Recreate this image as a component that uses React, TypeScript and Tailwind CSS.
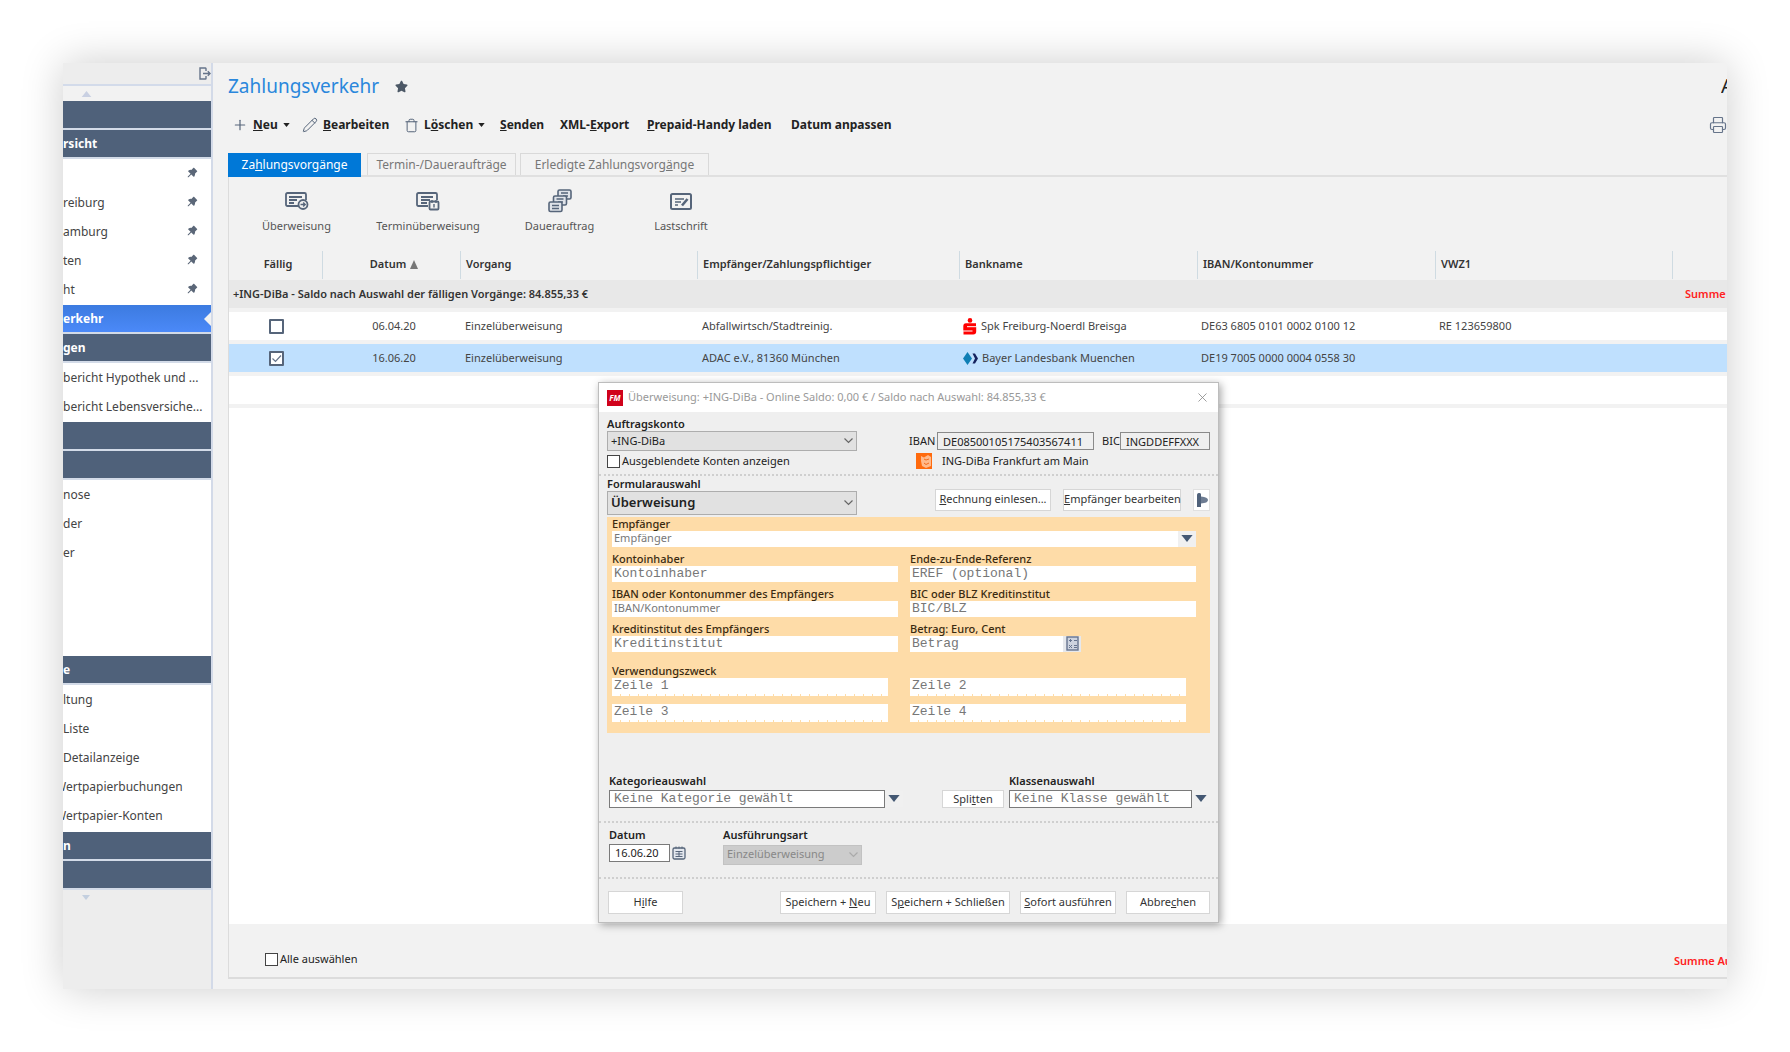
import React from 'react';
import clsx from 'clsx';
import { Pencil, Plus, Printer, Trash, X } from 'lucide-react';
import { AiFillPushpin } from 'react-icons/ai';
import { FaStar } from 'react-icons/fa';

interface NavEntry {
  label: string;
  pinned?: boolean;
  clipped?: boolean;
}

interface NavGroup {
  title: string;
  active?: boolean;
  entries: NavEntry[];
}

const navGroups: NavGroup[] = [
  { title: '', entries: [] },
  {
    title: 'rsicht',
    entries: [
      { label: '', pinned: true },
      { label: 'reiburg', pinned: true },
      { label: 'amburg', pinned: true },
      { label: 'ten', pinned: true },
      { label: 'ht', pinned: true },
    ],
  },
  { title: 'erkehr', active: true, entries: [] },
  {
    title: 'gen',
    entries: [{ label: 'bericht Hypothek und ...' }, { label: 'bericht Lebensversiche...' }],
  },
  { title: '', entries: [] },
  {
    title: '',
    entries: [
      { label: 'nose' },
      { label: 'der' },
      { label: 'er' },
      { label: '' },
      { label: '' },
      { label: '' },
    ],
  },
  {
    title: 'e',
    entries: [
      { label: 'ltung' },
      { label: 'Liste' },
      { label: 'Detailanzeige' },
      { label: 'Wertpapierbuchungen', clipped: true },
      { label: 'Wertpapier-Konten', clipped: true },
    ],
  },
  { title: 'n', entries: [] },
  { title: '', entries: [] },
];

// "&" marks the accelerator key
const Accel = ({ text }: { text: string }) => {
  const i = text.indexOf('&');
  if (i < 0) return <span>{text}</span>;
  return (
    <span>
      {text.slice(0, i)}
      <u className="underline-offset-1">{text[i + 1]}</u>
      {text.slice(i + 2)}
    </span>
  );
};

const Caret = ({ className }: { className?: string }) => (
  <svg viewBox="0 0 8 5" className={clsx('shrink-0', className)} fill="currentColor">
    <path d="M0 0h8L4 5z" />
  </svg>
);

const TransferIcon = () => (
  <svg width="24" height="20" viewBox="0 0 24 20" fill="none" stroke="#56657a" strokeWidth="1.8">
    <path d="M14 15H2.500Q1 15 1 13.500V3.500Q1 2 2.500 2H19.500Q21 2 21 3.500V9" />
    <path d="M4 6h13M4 9h8M4 12h5" />
    <circle cx="18" cy="13.500" r="4.500" fill="#f2f2f2" />
    <path d="M15.500 13.500h4.500M18.200 11.500l2 2-2 2" strokeWidth="1.400" />
  </svg>
);

const ScheduledIcon = () => (
  <svg width="24" height="20" viewBox="0 0 24 20" fill="none" stroke="#56657a" strokeWidth="1.8">
    <path d="M12 15H2.500Q1 15 1 13.500V3.500Q1 2 2.500 2H19.500Q21 2 21 3.500V9" />
    <path d="M5 6h12M5 9h9M5 12h6" />
    <rect x="13.500" y="10.500" width="9" height="8" rx="1" fill="#f2f2f2" />
    <path d="M16 9v3M20 9v3M18 13v3.500" strokeWidth="1.400" />
  </svg>
);

const StandingIcon = () => (
  <svg width="24" height="24" viewBox="0 0 24 24" fill="#dfe3e9" stroke="#56657a" strokeWidth="1.600">
    <rect x="10" y="1" width="13" height="9" rx="1.500" />
    <path d="M13 4h7M15 7h5" />
    <rect x="5.500" y="7" width="13" height="9" rx="1.500" />
    <path d="M8.500 10h7M10 13h5" />
    <rect x="1" y="13" width="13" height="9.500" rx="1.500" />
    <path d="M4 16.500h7M4 19.500h7" />
  </svg>
);

const DebitIcon = () => (
  <svg width="22" height="17" viewBox="0 0 22 17" fill="none" stroke="#56657a" strokeWidth="2">
    <rect x="1" y="1" width="20" height="15" rx="1.500" />
    <path d="M5 6h9M5 9h6M5 12h3" strokeWidth="1.500" />
    <path d="M12 12.500l5.500-6.500" strokeWidth="2.600" />
  </svg>
);

const SparkasseLogo = () => (
  <svg width="14" height="17" viewBox="0 0 14 17">
    <circle cx="7" cy="2.400" r="2.300" fill="#f00" />
    <path d="M3 5.200h10v2.900h.2v5.400q0 3-3 3H.500v-3H.300V8.200q0-3 2.700-3z" fill="#f00" />
    <path d="M4 8.700h10M0 13h9.500" stroke="#fff" strokeWidth="1" />
  </svg>
);

const BayernLogo = () => (
  <svg width="15" height="13" viewBox="0 0 15 13">
    <path d="M4.500 0L9 6.500 4.500 13 0 6.500z" fill="#0f7fb5" />
    <path d="M9.500 1.500h2.500l3 5-3 5H9.500l2.500-5z" fill="#15225e" />
  </svg>
);

const CalendarIcon = () => (
  <svg width="14" height="14" viewBox="0 0 14 14" fill="none" stroke="#56657a">
    <rect x="1" y="2" width="12" height="11" rx="1.500" fill="#e3e7ee" strokeWidth="1.300" />
    <path d="M4 .5v2M7 .5v2M10 .5v2M3.500 5.500h7M3.500 8h7M3.500 10.500h7M7 5v6" />
  </svg>
);

const CalculatorIcon = () => (
  <svg width="13" height="15" viewBox="0 0 13 15" fill="none" stroke="#66748f">
    <rect x="1" y="1" width="11" height="13" fill="#cdd3df" strokeWidth="1.400" />
    <path d="M3 4.500h3M4.500 3v3M8 4.500h3M3 9l3 3M6 9l-3 3M8 9.500h3M8 11.500h3" />
  </svg>
);

const Sidebar = () => (
  <nav className="flex w-[150px] shrink-0 flex-col border-r-2 border-[#d3dae8] bg-[#ededed] text-[12px] text-[#444]">
    <div className="flex h-[21px] items-center justify-end">
      <svg width="12" height="13" viewBox="0 0 12 13" fill="none" stroke="#66748a" strokeWidth="1.400">
        <path d="M7 4V1.500Q7 1 6.500 1H1v11h5.500q.5 0 .5-.5V9" />
        <path d="M4 6.500h7M8.800 4.300L11 6.500 8.800 8.700" />
      </svg>
    </div>
    <div className="flex h-[17px] items-center border-t-2 border-[#d3dbea] bg-[#f2f2f2] pl-[18px]">
      <Caret className="h-[6px] w-[11px] rotate-180 text-[#c9d0e2]" />
    </div>
    {navGroups.map((group, i) => (
      <div key={i} className={clsx(group.entries.length > 0 && 'bg-white', group.entries.length > 0 && (i > 3 ? 'pb-0.5' : 'pb-px'))}>
        <div
          className={clsx(
            'flex h-[29px] items-center justify-between overflow-hidden border-b-2 border-[#d3dbe8] font-bold text-white',
            group.active ? 'bg-linear-to-b from-[#3c7be0] to-[#4b89f8]' : 'bg-[#4f617a]'
          )}
        >
          <span>{group.title}</span>
          {group.active && (
            <svg width="7" height="14" viewBox="0 0 7 14" fill="#f2f2f2">
              <path d="M7 0v14L0 7z" />
            </svg>
          )}
        </div>
        {group.entries.map((entry, j) => (
          <a key={j} href="#" className="flex h-[29px] items-center justify-between overflow-hidden whitespace-nowrap pr-3">
            <span className={clsx(entry.clipped && '-ml-2')}>{entry.label}</span>
            {entry.pinned && <AiFillPushpin size={13} className="mb-0.5 text-[#5b6778]" />}
          </a>
        ))}
      </div>
    ))}
    <div className="flex h-3.5 items-center pl-[18px]">
      <Caret className="h-[5px] w-[10px] text-[#c3cfdf]" />
    </div>
  </nav>
);

const Toolbar = () => (
  <div className="flex h-8 items-center whitespace-nowrap pl-1 pr-0 text-[12px] font-bold text-[#222]">
    <button className="flex w-[70px] items-center gap-[5px]">
      <Plus size={16} strokeWidth={1.800} className="text-[#56657a]" />
      <Accel text="&Neu" />
      <Caret className="h-1 w-[7px]" />
    </button>
    <button className="flex w-[102px] items-center gap-[5px]">
      <Pencil size={16} strokeWidth={1.500} className="text-[#56657a]" />
      <Accel text="&Bearbeiten" />
    </button>
    <button className="flex w-[96px] items-center gap-[5px]">
      <Trash size={15} strokeWidth={1.600} className="text-[#56657a]" />
      <Accel text="L&öschen" />
      <Caret className="h-1 w-[7px]" />
    </button>
    <button className="w-[60px] text-left"><Accel text="&Senden" /></button>
    <button className="w-[87px] text-left"><Accel text="XML-&Export" /></button>
    <button className="w-[144px] text-left"><Accel text="&Prepaid-Handy laden" /></button>
    <button>Datum anpassen</button>
    <button aria-label="Drucken" className="ml-auto">
      <Printer size={18} strokeWidth={1.600} className="text-[#66748a]" />
    </button>
  </div>
);

const actions = [
  { label: 'Überweisung', icon: <TransferIcon />, width: 'w-[135px]' },
  { label: 'Terminüberweisung', icon: <ScheduledIcon />, width: 'w-[128px]' },
  { label: 'Dauerauftrag', icon: <StandingIcon />, width: 'w-[135px]' },
  { label: 'Lastschrift', icon: <DebitIcon />, width: 'w-[108px]' },
];

const TickBox = ({ id, checked, label }: { id?: string; checked?: boolean; label?: string }) => (
  <span className="inline-grid align-middle">
    <input
      id={id}
      type="checkbox"
      aria-label={label}
      defaultChecked={checked}
      className="peer size-[15px] appearance-none rounded-[1px] border-2 border-[#56657a] bg-white [grid-area:1/1]"
    />
    <svg viewBox="0 0 15 15" className="pointer-events-none invisible size-[15px] peer-checked:visible [grid-area:1/1]" fill="none" stroke="#66748a" strokeWidth="1.200">
      <path d="M3.500 7.500l3 3 5.500-6" />
    </svg>
  </span>
);

const PlainTick = ({ id }: { id: string }) => (
  <input id={id} type="checkbox" className="size-[13px] appearance-none border border-[#444] bg-white" />
);

const payments = [
  {
    date: '06.04.20',
    type: 'Einzelüberweisung',
    payee: 'Abfallwirtsch/Stadtreinig.',
    logo: <SparkasseLogo />,
    bank: 'Spk Freiburg-Noerdl Breisga',
    iban: 'DE63 6805 0101 0002 0100 12',
    note: 'RE 123659800',
    due: false,
  },
  {
    date: '16.06.20',
    type: 'Einzelüberweisung',
    payee: 'ADAC e.V., 81360 München',
    logo: <BayernLogo />,
    bank: 'Bayer Landesbank Muenchen',
    iban: 'DE19 7005 0000 0004 0558 30',
    note: '',
    due: true,
  },
];

const cell = 'border-t-4 border-[#f2f2f2] p-0';

const PaymentTable = () => (
  <table className="w-full table-fixed border-separate border-spacing-0 whitespace-nowrap text-left text-[11px] text-[#444]">
    <colgroup>
      <col className="w-[94px]" />
      <col className="w-[138px]" />
      <col className="w-[237px]" />
      <col className="w-[262px]" />
      <col className="w-[238px]" />
      <col className="w-[238px]" />
      <col className="w-[237px]" />
      <col />
    </colgroup>
    <thead className="text-[#333]">
      <tr className="h-[31px]">
        {['Fällig', 'Datum', 'Vorgang', 'Empfänger/Zahlungspflichtiger', 'Bankname', 'IBAN/Kontonummer', 'VWZ1', ''].map((name, i) => (
          <th key={i} className="p-0 font-semibold">
            <div
              className={clsx(
                'flex h-7 items-center gap-1 pl-[5px]',
                i < 7 && 'border-r border-[#cfdbe2]',
                i < 2 && 'justify-center'
              )}
            >
              {name}
              {name === 'Datum' && (
                <svg width="8" height="9" viewBox="0 0 8 9" fill="#777">
                  <path d="M4 0l4 9H0z" />
                </svg>
              )}
            </div>
          </th>
        ))}
      </tr>
    </thead>
    <tbody>
      <tr className="h-7 bg-[#e8e8e8] font-semibold text-[#333]">
        <td colSpan={7} className="p-0 pl-1">+ING-DiBa - Saldo nach Auswahl der fälligen Vorgänge: 84.855,33 €</td>
        <td className="overflow-hidden p-0 pl-3 text-[#f22]">Summe</td>
      </tr>
      {payments.map((p) => (
        <tr key={p.iban} className={clsx('h-8', p.due ? 'bg-[#bfe0fe]' : 'bg-white')}>
          <td className={clsx(cell, 'text-center')}>
            <TickBox checked={p.due} label="Fällig" />
          </td>
          <td className={clsx(cell, 'pl-1 text-center')}>{p.date}</td>
          <td className={clsx(cell, 'pl-1')}>{p.type}</td>
          <td className={clsx(cell, 'pl-1')}>{p.payee}</td>
          <td className={clsx(cell, 'pl-[3px]')}>
            <div className="flex items-center gap-1">
              {p.logo}
              {p.bank}
            </div>
          </td>
          <td className={clsx(cell, 'pl-[3px]')}>{p.iban}</td>
          <td className={clsx(cell, 'pl-[3px]')}>{p.note}</td>
          <td className={cell} />
        </tr>
      ))}
      <tr className="h-9 bg-white">
        <td colSpan={8} className="border-y-4 border-[#f2f2f2]" />
      </tr>
    </tbody>
  </table>
);

interface FieldProps {
  id: string;
  label: string;
  mono?: boolean;
  className?: string;
  children?: React.ReactNode;
  placeholder: string;
}

const Field = ({ id, label, mono, className, children, placeholder }: FieldProps) => (
  <div className="flex flex-col">
    <label htmlFor={id} className="h-3.5 leading-[14px] font-medium text-[#3a2a10]">{label}</label>
    <div className="flex">
      <input
        id={id}
        placeholder={placeholder}
        className={clsx(
          'h-4 bg-white px-0.5 outline-none placeholder:text-[#777]',
          mono && "font-['Liberation_Mono',monospace] text-[13px]",
          className
        )}
      />
      {children}
    </div>
  </div>
);

const PurposeLine = ({ n }: { n: number }) => (
  <div className="flex w-[276px] flex-col">
    <input
      aria-label={'Verwendungszweck Zeile ' + n}
      placeholder={'Zeile ' + n}
      className="h-4 bg-white px-0.5 font-['Liberation_Mono',monospace] text-[13px] outline-none placeholder:text-[#777]"
    />
    <div className="h-0.5 bg-[repeating-linear-gradient(90deg,#fff_0_8px,#fedca8_8px_9px)]" />
  </div>
);

interface ComboProps {
  id: string;
  value: string;
  disabled?: boolean;
  className?: string;
}

const Combo = ({ id, value, disabled, className }: ComboProps) => (
  <div className="grid items-center">
    <select
      id={id}
      disabled={disabled}
      className={clsx('w-full appearance-none border px-[3px] py-0 leading-normal [grid-area:1/1]', className)}
    >
      <option>{value}</option>
    </select>
    <svg width="9" height="6" viewBox="0 0 9 6" className="pointer-events-none mr-1 justify-self-end [grid-area:1/1]" fill="none" stroke={disabled ? '#aaa' : '#666'} strokeWidth="1.200">
      <path d="M.5.5l4 4 4-4" />
    </svg>
  </div>
);

const DropButton = ({ label }: { label: string }) => (
  <button aria-label={label} className="flex h-4 w-[18px] items-center justify-center bg-[#f0f0f0] text-[#445873]">
    <Caret className="h-[7px] w-3" />
  </button>
);

const PushButton = ({ text, className }: { text: string; className?: string }) => (
  <button className={clsx('border border-[#d6d6d6] bg-white text-center whitespace-nowrap text-[#333]', className)}>
    <Accel text={text} />
  </button>
);

const monoBox = "h-[18px] border border-[#7a7a7a] bg-white px-1 font-['Liberation_Mono',monospace] text-[13px] outline-none placeholder:text-[#777]";

const TransferDialog = () => (
  <div
    role="dialog"
    aria-label="Überweisung"
    className="absolute left-[535px] top-[319px] w-[621px] border border-[#bdbdbd] bg-[#efefef] text-[11px] text-[#222] shadow-[2px_2px_8px_rgba(0,0,0,0.35)]"
  >
    <div className="flex h-[29px] items-center gap-[5px] bg-white px-2 text-[#999]">
      <span className="flex size-4 items-center justify-center bg-[#d0021b] text-[8px] font-bold text-white italic">FM</span>
      <span>Überweisung: +ING-DiBa - Online Saldo: 0,00 € / Saldo nach Auswahl: 84.855,33 €</span>
      <button aria-label="Schließen" className="ml-auto text-[#888]">
        <X size={15} strokeWidth={1.300} />
      </button>
    </div>

    <div className="flex justify-between px-2 pt-1 pb-1">
      <div className="flex w-[250px] flex-col">
        <label htmlFor="account" className="leading-[15px] font-semibold">Auftragskonto</label>
        <Combo id="account" value="+ING-DiBa" className="h-5 border-[#adadad] bg-[#e1e1e1]" />
        <div className="mt-[3px] flex h-[15px] items-center gap-0.5">
          <PlainTick id="hidden-accounts" />
          <label htmlFor="hidden-accounts">Ausgeblendete Konten anzeigen</label>
        </div>
      </div>
      <div className="w-[301px] pt-4">
        <div className="flex items-center">
          <label htmlFor="own-iban" className="w-7">IBAN</label>
          <input id="own-iban" readOnly defaultValue="DE08500105175403567411" className="h-[18px] w-[157px] border border-[#8a8a8a] px-[5px]" />
          <label htmlFor="own-bic" className="ml-2 w-[18px]">BIC</label>
          <input id="own-bic" readOnly defaultValue="INGDDEFFXXX" className="h-[18px] w-[90px] border border-[#8a8a8a] px-[5px]" />
        </div>
        <div className="mt-[3px] flex items-center gap-2.5 pl-[7px]">
          <svg width="16" height="16" viewBox="0 0 16 16">
            <path d="M0 0h16v16H0z" fill="#ff6a0d" />
            <path d="M5 3l3 1.500L12 2l3 2v9l-5 2-4-2-1-5z" fill="#ffb98a" />
            <path d="M8 6l2 1 3-1M8 10l2 1.500 3-1.500" stroke="#f26a1b" fill="none" />
          </svg>
          <span>ING-DiBa Frankfurt am Main</span>
        </div>
      </div>
    </div>

    <div className="border-t-2 border-dotted border-[#cfcfcf]" />

    <div className="flex items-start justify-between px-2 pb-0.5">
      <div className="flex w-[250px] flex-col">
        <label htmlFor="form" className="leading-[15px] font-semibold">Formularauswahl</label>
        <Combo id="form" value="Überweisung" className="h-6 border-[#adadad] bg-[#e1e1e1] text-[13px] font-semibold" />
      </div>
      <div className="flex gap-3 pt-[13px]">
        <PushButton text="&Rechnung einlesen..." className="h-[22px] w-[116px]" />
        <PushButton text="&Empfänger bearbeiten" className="h-[22px] w-[118px]" />
        <button aria-label="Vorlagen" className="flex h-[22px] w-[17px] items-center justify-center border border-[#e0e0e0] bg-white">
          <svg width="12" height="14" viewBox="0 0 12 14">
            <path d="M1 2.500Q1 0 3 0t2 2v1.500Q12 4 12 7t-7 3.500V14H1z" fill="#6d7c92" />
            <path d="M1 2.500Q1 0 3 0t2 2v12H1z" fill="#4f617a" />
          </svg>
        </button>
      </div>
    </div>

    <div className="mx-2 flex flex-col gap-[5px] bg-[#fedca8] pb-[11px] pl-[5px]">
      <Field id="payee" label="Empfänger" placeholder="Empfänger" className="w-[566px]">
        <DropButton label="Empfänger wählen" />
      </Field>
      <div className="grid grid-cols-[298px_1fr] gap-y-[5px]">
        <Field id="holder" label="Kontoinhaber" placeholder="Kontoinhaber" mono className="w-[286px]" />
        <Field id="eref" label="Ende-zu-Ende-Referenz" placeholder="EREF (optional)" mono className="w-[286px]" />
        <Field id="iban" label="IBAN oder Kontonummer des Empfängers" placeholder="IBAN/Kontonummer" className="w-[286px]" />
        <Field id="bic" label="BIC oder BLZ Kreditinstitut" placeholder="BIC/BLZ" mono className="w-[286px]" />
        <Field id="bank" label="Kreditinstitut des Empfängers" placeholder="Kreditinstitut" mono className="w-[286px]" />
        <Field id="amount" label="Betrag: Euro, Cent" placeholder="Betrag" mono className="w-[153px]">
          <button aria-label="Rechner" className="flex h-4 w-[18px] items-center justify-center bg-[#e6e8ec]">
            <CalculatorIcon />
          </button>
        </Field>
      </div>
      <div className="pt-[7px]">
        <div className="leading-[14px] font-medium text-[#3a2a10]">Verwendungszweck</div>
        <div className="grid grid-cols-[298px_1fr] gap-y-2">
          <PurposeLine n={1} />
          <PurposeLine n={2} />
          <PurposeLine n={3} />
          <PurposeLine n={4} />
        </div>
      </div>
    </div>

    <div className="flex items-end pt-10 pr-2 pb-[13px] pl-[10px]">
      <div className="flex flex-col gap-0.5">
        <label htmlFor="category" className="leading-[15px] font-semibold">Kategorieauswahl</label>
        <div className="flex items-center">
          <input id="category" placeholder="Keine Kategorie gewählt" className={clsx(monoBox, 'w-[276px]')} />
          <DropButton label="Kategorie wählen" />
        </div>
      </div>
      <PushButton text="Spli&tten" className="ml-[39px] h-[18px] w-[62px] leading-none" />
      <div className="ml-auto flex flex-col gap-0.5">
        <label htmlFor="class" className="leading-[15px] font-semibold">Klassenauswahl</label>
        <div className="flex items-center">
          <input id="class" placeholder="Keine Klasse gewählt" className={clsx(monoBox, 'w-[183px]')} />
          <DropButton label="Klasse wählen" />
        </div>
      </div>
    </div>

    <div className="border-t-2 border-dotted border-[#cfcfcf]" />

    <div className="flex items-start pt-1 pr-2 pb-3 pl-[10px]">
      <div className="flex w-[114px] flex-col gap-0.5">
        <label htmlFor="date" className="leading-[15px] font-semibold">Datum</label>
        <div className="flex items-center gap-0.5">
          <input id="date" defaultValue="16.06.20" className="h-[18px] w-[61px] border border-[#7a7a7a] bg-white px-[5px]" />
          <button aria-label="Kalender">
            <CalendarIcon />
          </button>
        </div>
      </div>
      <div className="flex w-[139px] flex-col gap-[3px]">
        <label htmlFor="mode" className="leading-[15px] font-semibold">Ausführungsart</label>
        <Combo id="mode" value="Einzelüberweisung" disabled className="h-5 border-[#c2c2c2] bg-[#cccccc] text-[#888]" />
      </div>
    </div>

    <div className="border-t-2 border-dotted border-[#cfcfcf]" />

    <div className="flex gap-2.5 pt-3 pr-2 pb-[8px] pl-[9px]">
      <PushButton text="H&ilfe" className="mr-auto h-[23px] w-[75px]" />
      <PushButton text="Speichern + &Neu" className="h-[23px] w-[96px]" />
      <PushButton text="S&peichern + Schließen" className="h-[23px] w-[124px]" />
      <PushButton text="&Sofort ausführen" className="h-[23px] w-[96px]" />
      <PushButton text="Abbre&chen" className="h-[23px] w-[84px]" />
    </div>
  </div>
);

const tabs = [
  { label: 'Za&hlungsvorgänge', width: 'w-[133px]' },
  { label: 'Termin-/Daueraufträge', width: 'w-[149px]' },
  { label: 'Erledigte Zahlungsvorg&änge', width: 'w-[189px]' },
];

const App: React.FC = () => {
  return (
    <div className="flex min-h-screen bg-white p-[63px] font-['Noto_Sans',sans-serif]">
      <div className="relative flex min-w-0 flex-1 overflow-hidden bg-[#f2f2f2] shadow-[0_0_40px_rgba(0,0,0,0.2)]">
        <Sidebar />

        <main className="flex min-w-0 flex-1 flex-col pb-2.5 pl-[15px]">
          <header className="flex h-[46px] items-center">
            <h1 className="text-[19px] text-[#2a87dc]">Zahlungsverkehr</h1>
            <FaStar size={13} className="ml-4 text-[#4c5866]" />
            <span className="ml-auto w-1.5 overflow-hidden text-[20px] text-[#222]">A</span>
          </header>

          <Toolbar />

          <div className="mt-3 flex h-6 items-stretch border-b-2 border-[#e0e0e0]" role="tablist">
            {tabs.map((tab, i) => (
              <button
                key={tab.label}
                role="tab"
                aria-selected={i === 0}
                className={clsx(
                  'whitespace-nowrap text-[12px]',
                  tab.width,
                  i === 0 ? 'mr-1.5 h-6 bg-[#0078d7] text-white' : 'mr-1 border border-b-0 border-[#d9d9d9] text-[#777]'
                )}
              >
                <Accel text={tab.label} />
              </button>
            ))}
          </div>

          <section className="flex flex-1 flex-col border-b-2 border-l border-[#dcdcdc]">
            <div className="flex h-[72px] text-[11px] text-[#555]">
              {actions.map((a) => (
                <button key={a.label} className={clsx('flex flex-col items-center pt-2.5', a.width)}>
                  <span className="flex h-7 items-center">{a.icon}</span>
                  <span className="mt-[3px] leading-4">{a.label}</span>
                </button>
              ))}
            </div>

            <div className="flex flex-1 flex-col">
              <PaymentTable />
              <div className="flex-1 bg-white" />
            </div>

            <footer className="flex h-[53px] items-center pt-[18px] pl-9 text-[11px] text-[#222]">
              <PlainTick id="select-all" />
              <label htmlFor="select-all" className="pl-0.5">Alle auswählen</label>
              <span className="ml-auto w-[53px] overflow-hidden pt-1 font-semibold whitespace-nowrap text-[#f22]">Summe Auswahl</span>
            </footer>
          </section>
        </main>

        <TransferDialog />
      </div>
    </div>
  );
};

export default App;
